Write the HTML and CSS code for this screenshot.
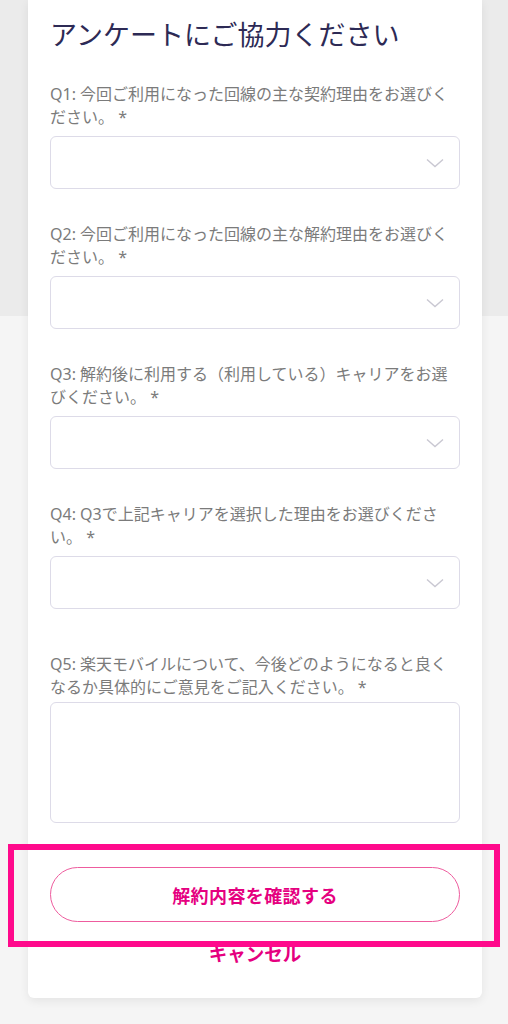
FILE: index.html
```html
<!DOCTYPE html>
<html lang="ja">
<head>
<meta charset="utf-8">
<title>アンケート</title>
<link rel="stylesheet" href="styles.css">
</head>
<body>
<div class="page">
  <main class="card">
    <h1 class="title">アンケートにご協力ください</h1>

    <div class="field">
      <label class="label">Q1: 今回ご利用になった回線の主な契約理由をお選びく<br>ださい。 *</label>
      <div class="select"><svg class="chev" width="18" height="10" viewBox="0 0 18 10"><path d="M1 1.5 L9 8.5 L17 1.5" fill="none" stroke="#c9c8d2" stroke-width="1.4"/></svg></div>
    </div>

    <div class="field">
      <label class="label">Q2: 今回ご利用になった回線の主な解約理由をお選びく<br>ださい。 *</label>
      <div class="select"><svg class="chev" width="18" height="10" viewBox="0 0 18 10"><path d="M1 1.5 L9 8.5 L17 1.5" fill="none" stroke="#c9c8d2" stroke-width="1.4"/></svg></div>
    </div>

    <div class="field">
      <label class="label">Q3: 解約後に利用する（利用している）キャリアをお選<br>びください。 *</label>
      <div class="select"><svg class="chev" width="18" height="10" viewBox="0 0 18 10"><path d="M1 1.5 L9 8.5 L17 1.5" fill="none" stroke="#c9c8d2" stroke-width="1.4"/></svg></div>
    </div>

    <div class="field">
      <label class="label">Q4: Q3で上記キャリアを選択した理由をお選びくださ<br>い。 *</label>
      <div class="select"><svg class="chev" width="18" height="10" viewBox="0 0 18 10"><path d="M1 1.5 L9 8.5 L17 1.5" fill="none" stroke="#c9c8d2" stroke-width="1.4"/></svg></div>
    </div>

    <div class="field field-last">
      <label class="label label-tight">Q5: 楽天モバイルについて、今後どのようになると良く<br>なるか具体的にご意見をご記入ください。 *</label>
      <div class="textarea"></div>
    </div>

    <button class="btn-confirm" type="button">解約内容を確認する</button>
    <div class="cancel">キャンセル</div>
  </main>
  <div class="highlight"></div>
</div>
</body>
</html>
```

FILE: styles.css
```css
* { box-sizing: border-box; }

html, body {
  margin: 0;
  padding: 0;
}

body {
  width: 508px;
  height: 1024px;
  overflow: hidden;
  background: linear-gradient(#ebebeb 0, #ebebeb 316px, #f5f5f5 316px);
  font-family: "Noto Sans", "Noto Sans CJK JP", sans-serif;
}

.page {
  position: relative;
  height: 1024px;
  padding-left: 28px;
}

.card {
  width: 454px;
  height: 998px;
  background: #fff;
  border-radius: 0 0 6px 6px;
  box-shadow: 0 3px 10px rgba(0, 0, 0, 0.07);
  padding: 16px 22px 0 22px;
  display: flex;
  flex-direction: column;
}

.title {
  margin: 0;
  font-size: 27px;
  line-height: 38px;
  font-weight: 400;
  color: #2d2a55;
  white-space: nowrap;
}

.field {
  display: flex;
  flex-direction: column;
  margin-top: 29px;
}

.field + .field {
  margin-top: 34px;
}

.field.field-last {
  margin-top: 44px;
}

.label {
  font-size: 16px;
  line-height: 23px;
  color: #7b7b7b;
  white-space: nowrap;
  margin-bottom: 7px;
}

.label-tight {
  margin-bottom: 3px;
}

.select {
  height: 53px;
  border: 1px solid #dddbe8;
  border-radius: 6px;
  display: flex;
  align-items: center;
  justify-content: flex-end;
  padding-right: 15px;
}

.chev { display: block; }

.textarea {
  height: 121px;
  border: 1px solid #dddbe8;
  border-radius: 6px;
}

.btn-confirm {
  margin-top: 44px;
  height: 55px;
  width: 100%;
  border: 1.5px solid #ee5c9e;
  border-radius: 28px;
  background: #fff;
  color: #e5007f;
  font-family: "Noto Sans CJK JP", sans-serif;
  font-size: 18px;
  font-weight: 700;
  letter-spacing: 0.4px;
  padding: 0;
}

.cancel {
  margin-top: 19px;
  text-align: center;
  font-family: "Noto Sans CJK JP", sans-serif;
  font-size: 18.5px;
  font-weight: 700;
  line-height: 24px;
  color: #e5007f;
}

.highlight {
  position: absolute;
  left: 8px;
  top: 844px;
  width: 492px;
  height: 103px;
  border: 6px solid #ff0a8c;
  pointer-events: none;
}
```
